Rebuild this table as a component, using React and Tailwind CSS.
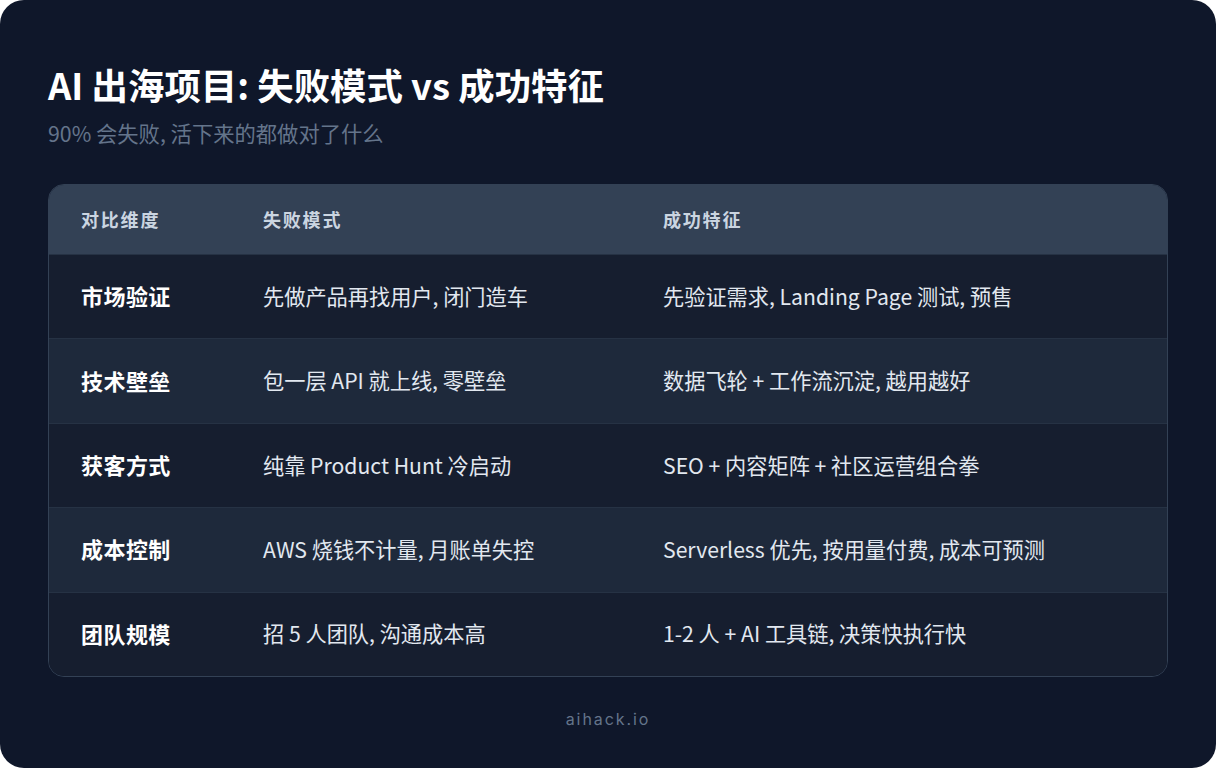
const rows = [
  ["市场验证", "先做产品再找用户, 闭门造车", "先验证需求, Landing Page 测试, 预售"],
  ["技术壁垒", "包一层 API 就上线, 零壁垒", "数据飞轮 + 工作流沉淀, 越用越好"],
  ["获客方式", "纯靠 Product Hunt 冷启动", "SEO + 内容矩阵 + 社区运营组合拳"],
  ["成本控制", "AWS 烧钱不计量, 月账单失控", "Serverless 优先, 按用量付费, 成本可预测"],
  ["团队规模", "招 5 人团队, 沟通成本高", "1-2 人 + AI 工具链, 决策快执行快"],
];

export default function App() {
  return (
    <div className="w-[1216px] h-[768px] bg-white font-['Noto_Sans_CJK_SC','Noto_Sans',sans-serif]">
      <div className="w-full h-full rounded-[24px] bg-[#0f172a] px-12 pt-[60px] flex flex-col">
        {/* Title */}
        <h1 className="text-[36.4px] leading-[48px] font-bold text-white">AI 出海项目: 失败模式 vs 成功特征</h1>
        <p className="mt-[10px] text-[21.3px] leading-[30px] text-[#64748b]">90% 会失败, 活下来的都做对了什么</p>

        {/* Table */}
        <div className="mt-[36px] rounded-[16px] border border-[#334155] overflow-hidden">
          <div className="flex items-center h-[69px] bg-[#334155] text-[18px] font-bold tracking-[0.1em] text-[#cbd5e1]">
            <div className="w-[214px] pl-8">对比维度</div>
            <div className="w-[400px]">失败模式</div>
            <div className="flex-1">成功特征</div>
          </div>
          {rows.map((r, i) => (
            <div
              key={r[0]}
              className={
                "flex items-center h-[84.4px] pb-[2px] border-t border-[#263244] " +
                (i % 2 === 0 ? "bg-[#161e2f]" : "bg-[#1e293b]")
              }
            >
              <div className="w-[214px] pl-8 text-[22px] font-bold text-white tracking-[0.02em]">{r[0]}</div>
              <div className="w-[400px] text-[21.2px] text-[#e2e8f0]">{r[1]}</div>
              <div className="flex-1 text-[21.2px] text-[#e2e8f0]">{r[2]}</div>
            </div>
          ))}
        </div>

        {/* Footer */}
        <div className="mt-[30px] text-center font-['Inter',sans-serif] text-[16px] leading-[24px] tracking-[0.12em] text-[#64748b]">aihack.io</div>
      </div>
    </div>
  );
}
